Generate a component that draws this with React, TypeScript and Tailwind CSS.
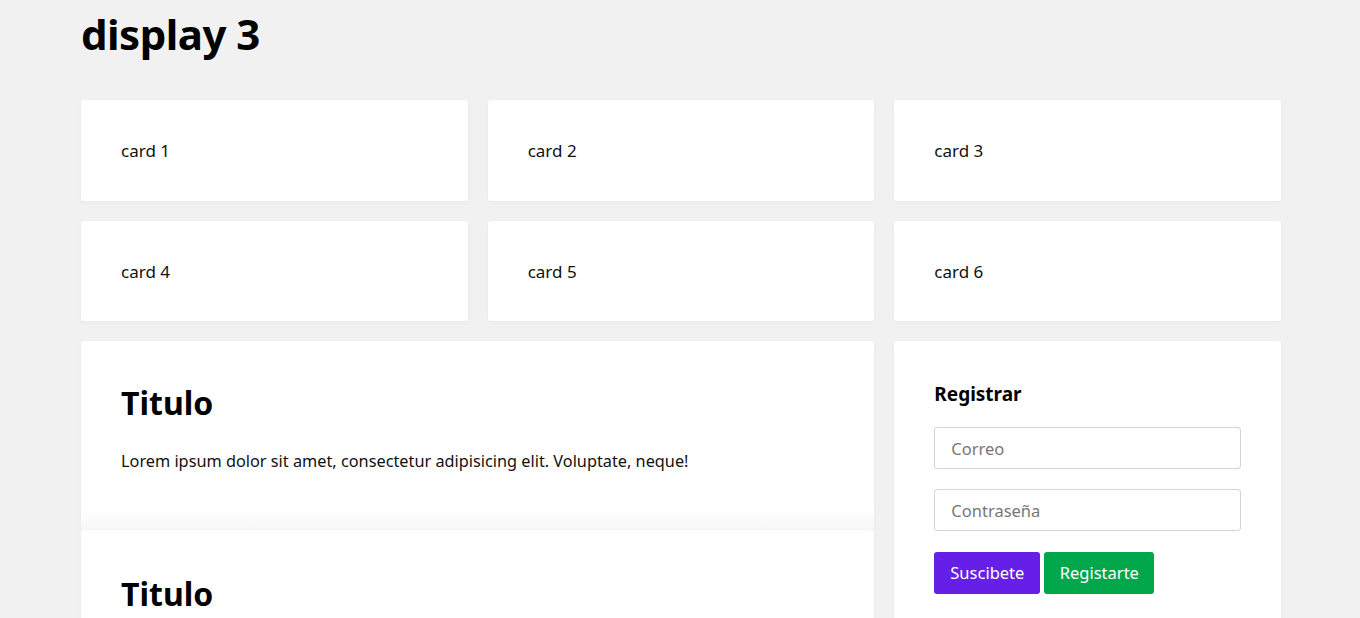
import React from "react";

const card = "bg-white rounded-[3px] shadow-[0_1px_4px_rgba(0,0,0,0.04)]";

export default function App() {
  return (
    <div className="min-h-[618px] bg-[#f1f1f1] font-['Noto_Sans',sans-serif] text-[#111]">
      <div className="ml-[81px] w-[1200px]">
        <h1 className="h-[100px] pt-[7px] text-[42px] font-bold leading-[54px] tracking-[-0.5px] text-black">display 3</h1>
        <div className="grid grid-cols-3 gap-5">
          {[1, 2, 3, 4, 5, 6].map((n) => (
            <div key={n} className={`${card} h-[100.5px] px-10 pt-[41px] text-[17px] leading-5`}>
              card {n}
            </div>
          ))}
          <div className="col-span-2 flex flex-col">
            <div className={`${card} h-[189px] px-10 pt-[40px] bg-gradient-to-b from-white from-[88%] to-[#f7f7f7]`}>
              <h2 className="text-[32px] font-bold leading-[44px] text-black">Titulo</h2>
              <p className="mt-[24px] text-[16.3px] leading-6">
                Lorem ipsum dolor sit amet, consectetur adipisicing elit. Voluptate, neque!
              </p>
            </div>
            <div className={`${card} h-[120px] px-10 pt-[42px]`}>
              <h2 className="text-[32px] font-bold leading-[44px] text-black">Titulo</h2>
            </div>
          </div>
          <div className={`${card} px-10 pt-[41px]`}>
            <h3 className="text-[19px] font-bold leading-6 text-black">Registrar</h3>
            <input
              placeholder="Correo"
              className="mt-[21px] block h-[42px] w-full rounded-[3px] border border-[#d4d4d4] px-4 text-[16.5px] placeholder:text-[#777] outline-none"
            />
            <input
              placeholder="Contraseña"
              className="mt-5 block h-[42px] w-full rounded-[3px] border border-[#d4d4d4] px-4 text-[16.5px] placeholder:text-[#777] outline-none"
            />
            <div className="mt-[21px] flex gap-1">
              <button className="h-[42px] w-[106px] rounded-[3px] bg-[#661fe6] text-[16.5px] text-white">Suscibete</button>
              <button className="h-[42px] w-[110px] rounded-[3px] bg-[#02a74c] text-[16.5px] text-white">Registarte</button>
            </div>
          </div>
        </div>
      </div>
    </div>
  );
}
